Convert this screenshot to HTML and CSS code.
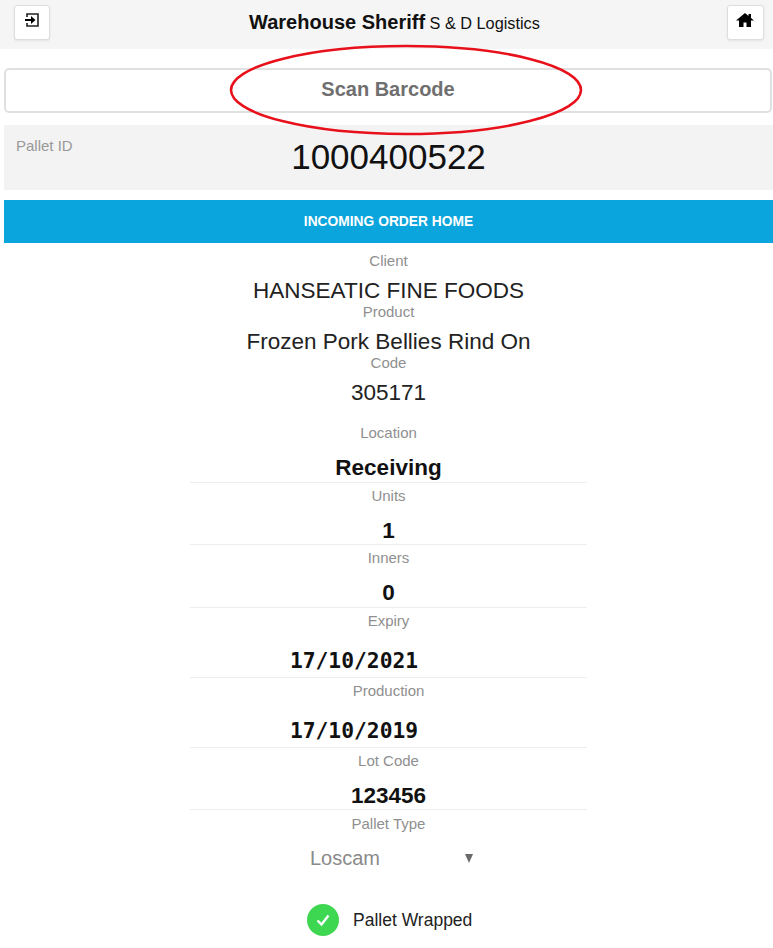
FILE: index.html
```html
<!DOCTYPE html>
<html lang="en">
<head>
<meta charset="utf-8">
<title>Warehouse Sheriff</title>
<link rel="stylesheet" href="styles.css">
</head>
<body>
<header class="topbar">
  <button class="icon-btn icon-btn-left" aria-label="Sign out">
    <svg width="16" height="16" viewBox="0 0 16 16"><path class="ico-line" d="M3 5V2h11v12H3v-3"/><path d="M1 7h6V4l4.500 4L7 12V9H1z"/></svg>
  </button>
  <h1 class="title"><span class="brand">Warehouse Sheriff</span> <span class="company">S &amp; D Logistics</span></h1>
  <button class="icon-btn" aria-label="Home">
    <svg width="18" height="14" viewBox="0 0 18 14"><path d="M9 0 0 7.500H3V14h4.500V9.500h3V14H15V7.500h3L15 5V1h-2.500v1.900z"/></svg>
  </button>
</header>

<main class="page">
  <div class="scan-row">
    <button class="scan-btn">Scan Barcode</button>
    <svg class="scan-ring" width="356" height="90" viewBox="0 0 356 90"><ellipse cx="178" cy="45" rx="175" ry="44"/></svg>
  </div>

  <section class="pallet">
    <span class="pallet-label">Pallet ID</span>
    <span class="pallet-id">1000400522</span>
  </section>

  <h2 class="banner">INCOMING ORDER HOME</h2>

  <section class="summary">
    <div class="sum-label">Client</div>
    <div class="sum-value">HANSEATIC FINE FOODS</div>
    <div class="sum-label">Product</div>
    <div class="sum-value">Frozen Pork Bellies Rind On</div>
    <div class="sum-label">Code</div>
    <div class="sum-value">305171</div>
  </section>

  <section class="form">
    <div class="row row-first"><div class="row-label">Location</div><div class="row-value">Receiving</div></div>
    <div class="row"><div class="row-label">Units</div><div class="row-value">1</div></div>
    <div class="row"><div class="row-label">Inners</div><div class="row-value">0</div></div>
    <div class="row row-date"><div class="row-label">Expiry</div><div class="row-date-value">17/10/2021</div></div>
    <div class="row row-date"><div class="row-label">Production</div><div class="row-date-value">17/10/2019</div></div>
    <div class="row"><div class="row-label">Lot Code</div><div class="row-value">123456</div></div>
    <div class="row row-select">
      <div class="row-label">Pallet Type</div>
      <div class="select"><span>Loscam</span><span class="select-arrow"></span></div>
    </div>
  </section>

  <div class="wrapped">
    <span class="check"><svg width="18" height="18" viewBox="0 0 18 18"><path d="M3.500 9.500 7.500 13.500 14.500 4.500"/></svg></span>
    <span class="wrapped-label">Pallet Wrapped</span>
  </div>
</main>
</body>
</html>
```
FILE: styles.css
```css
* { box-sizing: border-box; }
html, body { margin: 0; padding: 0; }
body {
  width: 773px;
  height: 948px;
  overflow: hidden;
  background: #fff;
  color: #222;
  font-family: "Liberation Sans", Arial, sans-serif;
}
.topbar {
  height: 49px;
  background: #f5f5f5;
  display: flex;
  align-items: flex-start;
  justify-content: space-between;
  padding: 5px 9px 0 14px;
}
.icon-btn {
  width: 37px;
  height: 35px;
  padding: 0 0 5px;
  background: #fff;
  border: 1px solid #ddd;
  border-radius: 3px;
  box-shadow: 0 1px 2px rgba(0,0,0,.08);
  display: flex;
  align-items: center;
  justify-content: center;
}
.icon-btn-left { width: 36px; }
.icon-btn svg { fill: #000; }
.ico-line { fill: none; stroke: #222; stroke-width: 1.600; }
.title {
  margin: 0;
  padding: 6px 0 0 12px;
  font-size: 16px;
  line-height: 22px;
  font-weight: 400;
  color: #111;
}
.brand { font-size: 20px; font-weight: 700; color: #111; }
.company { font-size: 16.300px; }
.page { padding-left: 4px; }
.scan-row { position: relative; padding-top: 19px; }
.scan-btn {
  display: block;
  width: 768px;
  height: 45px;
  padding: 0 0 2px;
  background: #fff;
  border: 2px solid #e0e0e0;
  border-radius: 5px;
  color: #6f6f6f;
  font: 700 20px "Liberation Sans", Arial, sans-serif;
}
.scan-ring { position: absolute; z-index: 2; left: 224px; top: -4px; overflow: visible; }
.scan-ring ellipse { fill: none; stroke: #e8101a; stroke-width: 2.600; }
.pallet {
  position: relative;
  margin-top: 12px;
  height: 65px;
  background: #f3f3f3;
  text-align: center;
}
.pallet-label {
  position: absolute;
  left: 12px;
  top: 12px;
  font-size: 15px;
  line-height: 18px;
  color: #999;
}
.pallet-id {
  display: block;
  padding-top: 10px;
  font-size: 35px;
  line-height: 44px;
  color: #111;
}
.banner {
  margin: 10px 0 0;
  height: 43px;
  background: #0aa5dc;
  color: #fff;
  font-size: 13.800px;
  font-weight: 700;
  line-height: 43px;
  text-align: center;
}
.summary { padding-top: 10px; text-align: center; }
.sum-label { font-size: 15px; line-height: 16px; color: #8f8f8f; }
.sum-value { padding-top: 8px; font-size: 22.500px; line-height: 27px; color: #222; }
.form { width: 397px; margin: 0 0 0 186px; padding-top: 14px; }
.row {
  height: 62.450px;
  border-bottom: 1px solid #eee;
  text-align: center;
}
.row-first { height: 63px; }
.row-date { height: 70px; }
.row-select { border-bottom: 0; height: 70px; padding-top: 1px; }
.row-label { padding-top: 5px; font-size: 15px; line-height: 16px; color: #8f8f8f; }
.row-value { padding-top: 14px; font-size: 22.500px; line-height: 26px; font-weight: 700; color: #111; }
.row-date-value {
  padding: 19px 69px 0 0;
  font: 700 21.300px/26px "DejaVu Sans Mono", monospace;
  color: #111;
}
.select {
  display: flex;
  justify-content: space-between;
  align-items: center;
  margin: 13px 0 0 120px;
  width: 163px;
  font-size: 20px;
  line-height: 26px;
  color: #8a8a8a;
}
.select-arrow {
  width: 0;
  height: 0;
  border-left: 4.500px solid transparent;
  border-right: 4.500px solid transparent;
  border-top: 9px solid #6a6a6a;
}
.wrapped {
  margin: 24px 0 0 303px;
  display: flex;
  align-items: center;
  gap: 14px;
}
.check {
  width: 32px;
  height: 32px;
  border-radius: 50%;
  background: #3ed752;
  display: flex;
  align-items: center;
  justify-content: center;
}
.check path { fill: none; stroke: #fff; stroke-width: 2.400; }
.wrapped-label { font-size: 17.500px; color: #222; }
```
